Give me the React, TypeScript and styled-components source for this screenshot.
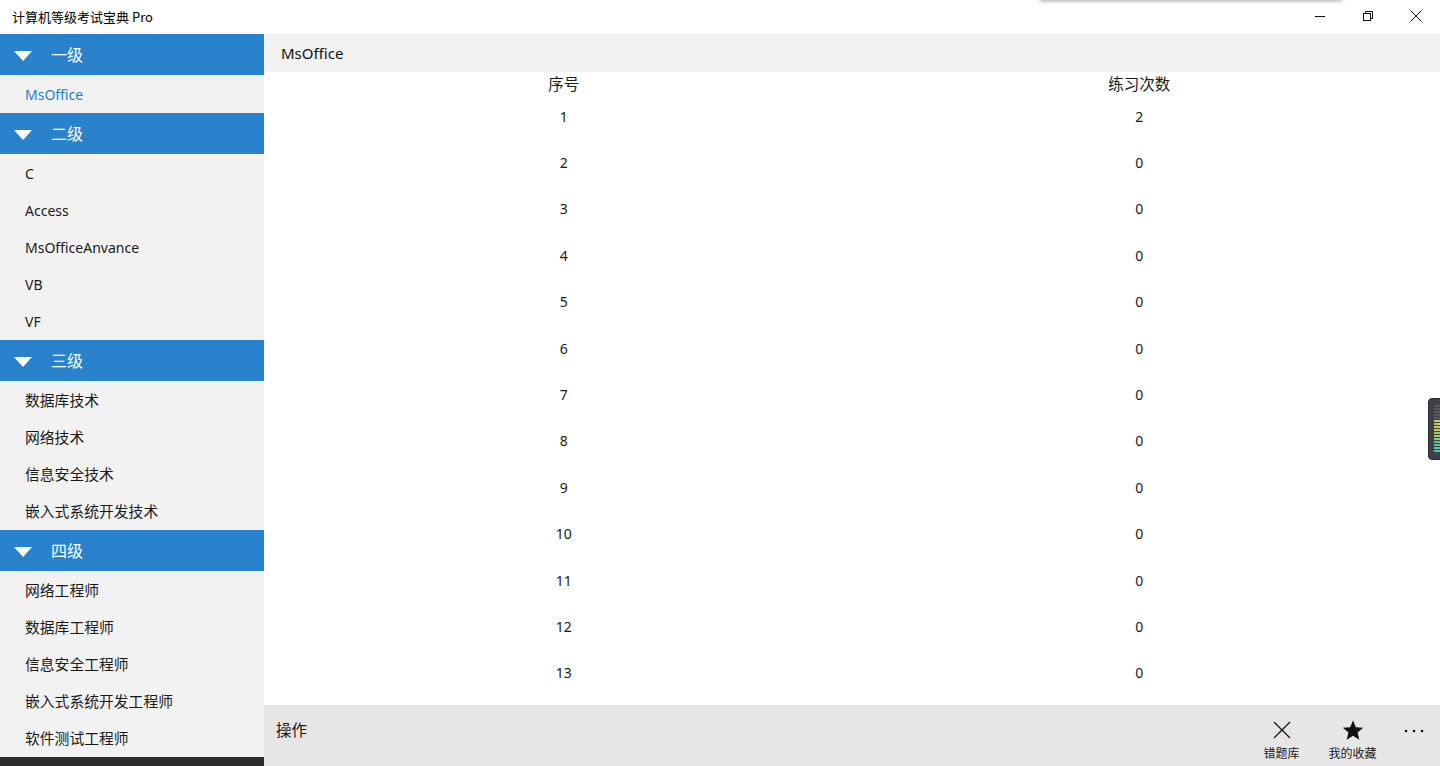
import styled, { createGlobalStyle } from 'styled-components';

const GlobalStyle = createGlobalStyle`
  html, body { margin: 0; padding: 0; background: #ffffff; }
  body {
    font-family: "Noto Sans", "Noto Sans CJK SC", sans-serif;
    color: #1a1a1a;
    overflow: hidden;
  }
  * { box-sizing: border-box; }
`;

const groups = [
  { title: '一级', items: ['MsOffice'] },
  { title: '二级', items: ['C', 'Access', 'MsOfficeAnvance', 'VB', 'VF'] },
  { title: '三级', items: ['数据库技术', '网络技术', '信息安全技术', '嵌入式系统开发技术'] },
  { title: '四级', items: ['网络工程师', '数据库工程师', '信息安全工程师', '嵌入式系统开发工程师', '软件测试工程师'] },
];

const rows = Array.from({ length: 13 }, (_, i) => ({ no: i + 1, count: i === 0 ? 2 : 0 }));

const isCjk = (s: string) => /[\u4e00-\u9fff]/.test(s);

export default function App() {
  return (
    <>
      <GlobalStyle />
      <Window>
        <TitleBar>
          <AppTitle>计算机等级考试宝典 Pro</AppTitle>
          <PopupShadow />
          <Controls>
            <CtrlBtn aria-label="minimize">
              <svg width="10" height="10" viewBox="0 0 10 10">
                <path d="M0 5.5h10" stroke="#111" strokeWidth="1" />
              </svg>
            </CtrlBtn>
            <CtrlBtn aria-label="restore">
              <svg width="10" height="10" viewBox="0 0 10 10" fill="none" stroke="#111" strokeWidth="1">
                <rect x="0.5" y="2.5" width="7" height="7" />
                <path d="M2.5 2.5V0.5h7v7h-2" />
              </svg>
            </CtrlBtn>
            <CtrlBtn aria-label="close">
              <svg width="12" height="12" viewBox="0 0 12 12" stroke="#111" strokeWidth="1">
                <path d="M0.5 0.5l11 11M11.5 0.5l-11 11" />
              </svg>
            </CtrlBtn>
          </Controls>
        </TitleBar>

        <Body>
          <Sidebar>
            {groups.map((g, gi) => (
              <Group key={g.title}>
                <GroupHeader>
                  <Caret>
                    <svg width="18" height="10" viewBox="0 0 18 10">
                      <path d="M0 0h18L9 10z" fill="#ffffff" />
                    </svg>
                  </Caret>
                  <GroupTitle>{g.title}</GroupTitle>
                </GroupHeader>
                {g.items.map((it, ii) => (
                  <NavItem key={it} $active={gi === 0 && ii === 0} $cjk={isCjk(it)}>
                    {it}
                  </NavItem>
                ))}
              </Group>
            ))}
            <SideFooter />
          </Sidebar>

          <Main>
            <PageHeader>MsOffice</PageHeader>
            <TableArea>
              <Table>
                <HeadRow>
                  <Cell>序号</Cell>
                  <Cell>练习次数</Cell>
                </HeadRow>
                {rows.map(r => (
                  <Row key={r.no}>
                    <Cell>{r.no}</Cell>
                    <Cell>{r.count}</Cell>
                  </Row>
                ))}
              </Table>
            </TableArea>
            <CommandBar>
              <BarLabel>操作</BarLabel>
              <Commands>
                <CmdButton>
                  <CmdIcon>
                    <svg width="20" height="20" viewBox="0 0 20 20" stroke="#111" strokeWidth="1.2">
                      <path d="M2 2l16 16M18 2L2 18" />
                    </svg>
                  </CmdIcon>
                  <CmdLabel>错题库</CmdLabel>
                </CmdButton>
                <CmdButton>
                  <CmdIcon>
                    <svg width="22" height="22" viewBox="0 0 24 24">
                      <path d="M12 1.5l3.1 7.4 8 .6-6.1 5.2 1.9 7.8L12 18.3 5.1 22.5 7 14.7 .9 9.5l8-.6z" fill="#111" />
                    </svg>
                  </CmdIcon>
                  <CmdLabel>我的收藏</CmdLabel>
                </CmdButton>
                <More>
                  <svg width="20" height="4" viewBox="0 0 20 4" fill="#111">
                    <circle cx="2" cy="2" r="1.3" />
                    <circle cx="10" cy="2" r="1.3" />
                    <circle cx="18" cy="2" r="1.3" />
                  </svg>
                </More>
              </Commands>
            </CommandBar>
          </Main>
        </Body>

        <Meter>
          {Array.from({ length: 16 }, (_, i) => (
            <MeterTick key={i} $level={i} />
          ))}
        </Meter>
      </Window>
    </>
  );
}

/* ── Styled components ───────────────────────────────────── */

const Window = styled.div`
  position: relative;
  width: 1440px;
  height: 766px;
  display: flex;
  flex-direction: column;
  overflow: hidden;
`;

const TitleBar = styled.div`
  position: relative;
  height: 34px;
  flex-shrink: 0;
  display: flex;
  align-items: center;
  background: #ffffff;
`;

const AppTitle = styled.span`
  padding-left: 12px;
  padding-bottom: 1px;
  font-size: 13px;
  color: #000;
  font-family: "Noto Sans CJK SC", sans-serif;
`;

const PopupShadow = styled.div`
  position: absolute;
  left: 1040px;
  top: -10px;
  width: 302px;
  height: 10px;
  background: #fff;
  box-shadow: 0 1px 4px rgba(0, 0, 0, 0.35);
`;

const Controls = styled.div`
  margin-left: auto;
  display: flex;
  height: 100%;
`;

const CtrlBtn = styled.div`
  width: 48px;
  height: 100%;
  display: flex;
  align-items: center;
  justify-content: center;
  padding-bottom: 2px;
`;

const Body = styled.div`
  flex: 1;
  display: flex;
  min-height: 0;
`;

const Sidebar = styled.nav`
  width: 264px;
  flex-shrink: 0;
  display: flex;
  flex-direction: column;
  background: #f2f2f2;
`;

const Group = styled.div`
  display: flex;
  flex-direction: column;
`;

const GroupHeader = styled.div`
  height: 42px;
  display: flex;
  align-items: center;
  background: #2a82cd;
  border-bottom: 1px solid #f8f8f8;
  color: #ffffff;
`;

const Caret = styled.span`
  width: 51px;
  display: flex;
  justify-content: center;
  padding-right: 6px;
  padding-top: 2px;
`;

const GroupTitle = styled.span`
  font-size: 16px;
  padding-bottom: 2px;
  font-family: "Noto Sans CJK SC", sans-serif;
`;

const NavItem = styled.div<{ $active?: boolean; $cjk?: boolean }>`
  height: 37px;
  display: flex;
  align-items: center;
  padding-left: 25px;
  padding-bottom: ${({ $cjk }) => ($cjk ? '3px' : '0')};
  font-size: ${({ $cjk }) => ($cjk ? '14.8px' : '14px')};
  font-family: "Noto Sans", "Noto Sans CJK SC", sans-serif;
  color: ${({ $active }) => ($active ? '#1f7fcf' : '#1a1a1a')};
`;

const SideFooter = styled.div`
  flex: 1;
  background: #2b2b2b;
`;

const Main = styled.main`
  flex: 1;
  display: flex;
  flex-direction: column;
  min-width: 0;
`;

const PageHeader = styled.div`
  height: 38px;
  flex-shrink: 0;
  display: flex;
  align-items: center;
  padding-left: 17px;
  padding-bottom: 1px;
  font-size: 15px;
  background: #f2f2f2;
  color: #111;
`;

const TableArea = styled.div`
  flex: 1;
  min-height: 0;
  overflow: hidden;
  padding: 0 13px 0 12px;
`;

const Table = styled.div`
  display: flex;
  flex-direction: column;
`;

const HeadRow = styled.div`
  height: 21px;
  display: grid;
  grid-template-columns: 1fr 1fr;
  align-items: center;
  font-family: "Noto Sans CJK SC", sans-serif;
  font-size: 15.5px;
`;

const Row = styled.div`
  height: 46.4px;
  display: grid;
  grid-template-columns: 1fr 1fr;
  align-items: center;
  font-size: 14px;
`;

const Cell = styled.div`
  text-align: center;
`;

const CommandBar = styled.div`
  height: 61px;
  flex-shrink: 0;
  display: flex;
  align-items: flex-start;
  background: #e6e6e6;
`;

const BarLabel = styled.span`
  padding: 13px 0 0 12px;
  font-size: 15.5px;
  font-family: "Noto Sans CJK SC", sans-serif;
`;

const Commands = styled.div`
  margin-left: auto;
  display: flex;
  align-items: flex-start;
  height: 100%;
`;

const CmdButton = styled.div`
  width: 71px;
  display: flex;
  flex-direction: column;
  align-items: center;
  padding-top: 14px;
`;

const CmdIcon = styled.span`
  height: 22px;
  display: flex;
  align-items: center;
  justify-content: center;
`;

const CmdLabel = styled.span`
  margin-top: 3px;
  font-size: 12px;
  font-family: "Noto Sans CJK SC", sans-serif;
`;

const More = styled.div`
  width: 52px;
  display: flex;
  justify-content: center;
  padding-top: 24px;
`;

const Meter = styled.div`
  position: absolute;
  left: 1428px;
  top: 398px;
  width: 16px;
  height: 62px;
  border-radius: 4px;
  background: #3d4046;
  border: 1px solid #2a2c30;
  display: flex;
  flex-direction: column;
  gap: 1px;
  padding: 6px 0 4px 5px;
`;

const MeterTick = styled.div<{ $level: number }>`
  width: 7px;
  height: 2px;
  background: ${({ $level }) =>
    $level < 5 ? '#55585e' : $level < 9 ? '#c9cc54' : $level < 12 ? '#8fcf6a' : '#4fc9a3'};
`;
